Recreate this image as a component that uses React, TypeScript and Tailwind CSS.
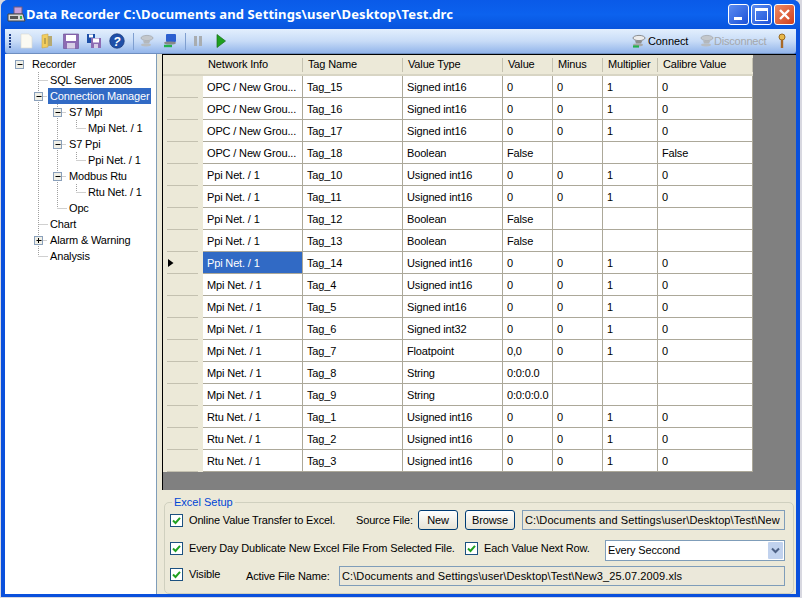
import type { ReactNode } from 'react';

const ROWS = [
  ['OPC / New Grou...', 'Tag_15', 'Signed int16', '0', '0', '1', '0'],
  ['OPC / New Grou...', 'Tag_16', 'Signed int16', '0', '0', '1', '0'],
  ['OPC / New Grou...', 'Tag_17', 'Signed int16', '0', '0', '1', '0'],
  ['OPC / New Grou...', 'Tag_18', 'Boolean', 'False', '', '', 'False'],
  ['Ppi Net. / 1', 'Tag_10', 'Usigned int16', '0', '0', '1', '0'],
  ['Ppi Net. / 1', 'Tag_11', 'Usigned int16', '0', '0', '1', '0'],
  ['Ppi Net. / 1', 'Tag_12', 'Boolean', 'False', '', '', ''],
  ['Ppi Net. / 1', 'Tag_13', 'Boolean', 'False', '', '', ''],
  ['Ppi Net. / 1', 'Tag_14', 'Usigned int16', '0', '0', '1', '0'],
  ['Mpi Net. / 1', 'Tag_4', 'Usigned int16', '0', '0', '1', '0'],
  ['Mpi Net. / 1', 'Tag_5', 'Signed int16', '0', '0', '1', '0'],
  ['Mpi Net. / 1', 'Tag_6', 'Signed int32', '0', '0', '1', '0'],
  ['Mpi Net. / 1', 'Tag_7', 'Floatpoint', '0,0', '0', '1', '0'],
  ['Mpi Net. / 1', 'Tag_8', 'String', '0:0:0.0', '', '', ''],
  ['Mpi Net. / 1', 'Tag_9', 'String', '0:0:0:0.0', '', '', ''],
  ['Rtu Net. / 1', 'Tag_1', 'Usigned int16', '0', '0', '1', '0'],
  ['Rtu Net. / 1', 'Tag_2', 'Usigned int16', '0', '0', '1', '0'],
  ['Rtu Net. / 1', 'Tag_3', 'Usigned int16', '0', '0', '1', '0'],
];

const COLS = [
  { name: 'Network Info', w: 100 },
  { name: 'Tag Name', w: 100 },
  { name: 'Value Type', w: 100 },
  { name: 'Value', w: 50 },
  { name: 'Minus', w: 50 },
  { name: 'Multiplier', w: 55 },
  { name: 'Calibre Value', w: 95 },
];

type TreeItem = {
  label: string;
  x: number;
  text: number;
  lines: number[];
  box?: '-' | '+';
  selected?: boolean;
};

// x: screen x of the +/- box or elbow, text: width of the guide column, lines: vertical guides
const TREE: TreeItem[] = [
  { label: 'Recorder', box: '-', x: 19, text: 25, lines: [] },
  { label: 'SQL Server 2005', x: 38, text: 43, lines: [38] },
  { label: 'Connection Manager', box: '-', x: 38, text: 43, lines: [38], selected: true },
  { label: 'S7 Mpi', box: '-', x: 57, text: 62, lines: [38, 57] },
  { label: 'Mpi Net. / 1', x: 76, text: 81, lines: [38, 57] },
  { label: 'S7 Ppi', box: '-', x: 57, text: 62, lines: [38, 57] },
  { label: 'Ppi Net. / 1', x: 76, text: 81, lines: [38, 57] },
  { label: 'Modbus Rtu', box: '-', x: 57, text: 62, lines: [38, 57] },
  { label: 'Rtu Net. / 1', x: 76, text: 81, lines: [38, 57] },
  { label: 'Opc', x: 57, text: 62, lines: [38] },
  { label: 'Chart', x: 38, text: 43, lines: [38] },
  { label: 'Alarm & Warning', box: '+', x: 38, text: 43, lines: [38] },
  { label: 'Analysis', x: 38, text: 43, lines: [] },
];

function TreeRow({ item, index }: { item: TreeItem; index: number }) {
  const cx = item.x - 4.5;
  return (
    <div className="flex h-4 items-center">
      <svg width={item.text} height="16" className="shrink-0">
        {item.lines.map((l) => (
          <line key={l} x1={l - 4.5} x2={l - 4.5} y1="0" y2="16" stroke="#a0a0a0" strokeDasharray="1 1" />
        ))}
        {!item.box && (
          <>
            <line x1={cx} x2={cx} y1="0" y2="8" stroke="#a0a0a0" strokeDasharray="1 1" />
            <line x1={cx} x2={cx + 9} y1="8.5" y2="8.5" stroke="#a0a0a0" strokeDasharray="1 1" />
          </>
        )}
        {item.box && index > 0 && (
          <line x1={cx + 5} x2={cx + 9} y1="8.5" y2="8.5" stroke="#a0a0a0" strokeDasharray="1 1" />
        )}
        {item.box && (
          <g>
            <rect x={cx - 4} y="4.5" width="8" height="8" fill="#f0efe6" stroke="#8aa0bb" />
            <line x1={cx - 2} x2={cx + 3} y1="8.5" y2="8.5" stroke="#000" />
            {item.box === '+' && <line x1={cx} x2={cx} y1="6" y2="11" stroke="#000" />}
          </g>
        )}
      </svg>
      <span
        className={`h-4 px-[2px] text-[11px] leading-[16px] tracking-[-0.15px] whitespace-nowrap ${
          item.selected ? 'w-[103px] bg-[#316ac5] text-white' : 'text-black'
        }`}
      >
        {item.label}
      </span>
    </div>
  );
}

function Check({ className = '' }: { className?: string }) {
  return (
    <span className={`flex h-[13px] w-[13px] shrink-0 items-center justify-center border border-[#1c5180] bg-white ${className}`}>
      <svg width="9" height="9" viewBox="0 0 9 9">
        <path d="M1 4.5 L3.5 7 L8 1.8" fill="none" stroke="#21a121" strokeWidth="2" />
      </svg>
    </span>
  );
}

function XpButton({ label, className }: { label: string; className: string }) {
  return (
    <button className={`flex h-[20px] shrink-0 items-center justify-center rounded-[3px] border border-[#003c74] bg-gradient-to-b from-white to-[#e6e3d6] text-[11px] text-black ${className}`}>
      {label}
    </button>
  );
}

function ReadonlyBox({ value, className }: { value: string; className: string }) {
  return (
    <div className={`flex h-[20px] shrink-0 items-center border border-[#7f9db9] bg-[#ebe8da] pl-[2px] text-[11px] whitespace-nowrap text-black ${className}`}>
      {value}
    </div>
  );
}

function ToolIcon({ children, className = '' }: { children: ReactNode; className?: string }) {
  return (
    <svg width="16" height="16" viewBox="0 0 16 16" className={`shrink-0 ${className}`}>
      {children}
    </svg>
  );
}

function Dish({ gray }: { gray?: boolean }) {
  return (
    <ToolIcon>
      <ellipse cx="9" cy="5" rx="6" ry="2.6" fill={gray ? '#c4c8cc' : '#ececec'} stroke={gray ? '#a6aaae' : '#777'} strokeWidth="0.8" />
      <path d="M5 7.5 L12.5 7.5 L11 10.5 L6 10.5 Z" fill={gray ? '#b4b8bc' : '#8e8e8e'} />
      <ellipse cx="8" cy="12" rx="5" ry="1.4" fill={gray ? '#b9bdc1' : '#a8a8a8'} />
      {!gray && <path d="M3 13.5 H9" stroke="#22b14c" strokeWidth="2.2" />}
    </ToolIcon>
  );
}

function Toolbar() {
  return (
    <div className="flex h-[25px] shrink-0 items-center rounded-b-[3px] border-b border-[#6f8fc0] bg-gradient-to-b from-[#e3effd] via-[#c8dcf7] to-[#93b5ea] pr-[6px] pl-[4px]">
      <div className="flex flex-col gap-[1px]">
        {[0, 1, 2, 3, 4].map((i) => (
          <span key={i} className="h-[2px] w-[2px] bg-[#20408a]" />
        ))}
      </div>
      <ToolIcon className="ml-[7px]">
        <path d="M3 1 H10.5 L14 4 V15 H3 Z" fill="#fbfaf2" stroke="#d8d8d0" strokeWidth="0.6" />
      </ToolIcon>
      <ToolIcon className="ml-[5px]">
        <path d="M3 2 L9 1 V14 L3 15 Z" fill="#f2cd5e" stroke="#c9a548" strokeWidth="0.6" />
        <path d="M9 3 H13 V13 H9 Z" fill="#b6a970" />
        <path d="M6 5 V11" stroke="#8b7a3a" />
      </ToolIcon>
      <ToolIcon className="ml-[8px]">
        <path d="M0.5 1 H15.5 V15.5 H0.5 Z" fill="#8d6bb3" stroke="#6a4a90" strokeWidth="0.6" />
        <rect x="3" y="2" width="10" height="6" fill="#fff" />
        <rect x="4" y="10" width="8" height="5.5" fill="#d8cfe6" />
      </ToolIcon>
      <ToolIcon className="ml-[7px]">
        <rect x="1" y="1" width="8" height="9" fill="#1d4fa8" />
        <rect x="3" y="1.5" width="4" height="3" fill="#fff" />
        <rect x="5" y="5" width="10" height="10" fill="#8d6bb3" />
        <rect x="7" y="5.5" width="6" height="4" fill="#fff" />
        <rect x="8" y="11" width="4" height="4" fill="#d8cfe6" />
      </ToolIcon>
      <ToolIcon className="ml-[7px]">
        <circle cx="8" cy="8" r="7.3" fill="#1f4fa8" stroke="#14306e" strokeWidth="0.6" />
        <text x="8" y="12.5" textAnchor="middle" fontSize="12" fontWeight="700" fontStyle="italic" fill="#fff" fontFamily="Liberation Sans">?</text>
      </ToolIcon>
      <span className="ml-[8px] h-[17px] w-[1px] bg-[#7f9fd0]" />
      <span className="ml-[4px]"><Dish gray /></span>
      <ToolIcon className="ml-[8px]">
        <rect x="4" y="1" width="10" height="8" rx="1" fill="#2c5fd0" />
        <ellipse cx="8" cy="10" rx="6" ry="1.6" fill="#888" />
        <path d="M2 13 L10 13" stroke="#22b14c" strokeWidth="2.4" />
      </ToolIcon>
      <span className="ml-[7px] h-[17px] w-[1px] bg-[#7f9fd0]" />
      <ToolIcon className="ml-[4px]">
        <rect x="4" y="3" width="3" height="10" fill="#a9adb0" />
        <rect x="9" y="3" width="3" height="10" fill="#a9adb0" />
      </ToolIcon>
      <ToolIcon className="ml-[7px]">
        <path d="M4 1.5 L12.5 8 L4 14.5 Z" fill="#1fa01f" stroke="#176f17" strokeWidth="0.7" />
      </ToolIcon>
      <div className="ml-auto flex items-center text-[11px]">
        <Dish />
        <span className="ml-[2px] w-[40px] tracking-[-0.1px] text-black">Connect</span>
        <span className="ml-[10px]"><Dish gray /></span>
        <span className="w-[52px] tracking-[-0.2px] text-[#a5a8ab]">Disconnect</span>
        <ToolIcon className="ml-[8px]">
          <circle cx="8" cy="4" r="3" fill="#e8b84a" stroke="#9a6a20" />
          <path d="M8 7 V15" stroke="#a86a28" strokeWidth="2.4" />
        </ToolIcon>
      </div>
    </div>
  );
}

function Grid() {
  return (
    <div className="h-[436px] border-t border-l border-black bg-[#808080]">
      <div className="flex h-[21px]">
        <div className="w-[40px] shrink-0 border-b-2 border-[#d8d5c4] bg-[#ece9d8]" />
        {COLS.map((c) => (
          <div
            key={c.name}
            style={{ width: c.w }}
            className="flex shrink-0 items-center border-b-2 border-[#d8d5c4] bg-[#ece9d8] pl-[5px] text-[11px] tracking-[-0.15px] text-black"
          >
            <span className="grow whitespace-nowrap">{c.name}</span>
            <span className="h-[14px] w-[1px] bg-[#c4c1b0]" />
          </div>
        ))}
      </div>
      {ROWS.map((row, r) => (
        <div key={r} className="flex h-[22px]">
          <div className="flex w-[40px] shrink-0 flex-col bg-[#ece9d8]">
            <div className="flex grow items-center pl-[5px]">
              {r === 8 && (
                <svg width="6" height="8" viewBox="0 0 6 8">
                  <path d="M0 0 L5.5 4 L0 8 Z" fill="#000" />
                </svg>
              )}
            </div>
            <span className="mr-[5px] ml-[4px] h-[1px] shrink-0 bg-[#c4c1b0]" />
          </div>
          {row.map((cell, c) => (
            <div
              key={c}
              style={{ width: COLS[c].w }}
              className={`flex shrink-0 items-center border-r border-b border-[#aca899] pt-[2px] pl-[4px] text-[11px] tracking-[-0.15px] whitespace-nowrap ${
                r === 8 && c === 0 ? 'bg-[#316ac5] text-white' : 'bg-white text-black'
              }`}
            >
              {cell}
            </div>
          ))}
        </div>
      ))}
    </div>
  );
}

function ExcelSetup() {
  return (
    <div className="relative mx-[2px] mt-[12px] h-[92px] rounded-[5px] border border-[#d0d0bf] px-[5px] pt-[7px] text-[11px] tracking-[-0.15px] text-black">
      <span className="absolute top-[-8px] left-[7px] bg-[#ece9d8] px-[2px] leading-[14px] tracking-normal text-[#0046d5]">Excel Setup</span>
      <div className="flex h-[20px] items-center">
        <Check />
        <span className="ml-[6px] w-[167px] whitespace-nowrap">Online Value Transfer to Excel.</span>
        <span className="w-[62px] whitespace-nowrap">Source File:</span>
        <XpButton label="New" className="w-[40px]" />
        <XpButton label="Browse" className="ml-[7px] w-[50px]" />
        <ReadonlyBox value="C:\Documents and Settings\user\Desktop\Test\New" className="ml-[7px] w-[263px] tracking-[0.1px]" />
      </div>
      <div className="mt-[10px] flex h-[21px] items-start">
        <Check className="mt-[2px]" />
        <span className="ml-[6px] w-[276px] leading-[17px] whitespace-nowrap">Every Day Dublicate New Excel File From Selected File.</span>
        <Check className="mt-[2px]" />
        <span className="ml-[6px] w-[121px] leading-[17px] whitespace-nowrap">Each Value Next Row.</span>
        <div className="flex h-[21px] w-[180px] items-center justify-between border border-[#7f9db9] bg-white pr-[1px] pl-[2px]">
          <span>Every Seccond</span>
          <span className="flex h-[17px] w-[15px] items-center justify-center rounded-[1px] bg-[#c1d2ee]">
            <svg width="9" height="7" viewBox="0 0 9 7">
              <path d="M1 1.5 L4.5 5 L8 1.5" fill="none" stroke="#4d6185" strokeWidth="2" />
            </svg>
          </span>
        </div>
      </div>
      <div className="mt-[5px] flex h-[20px] items-start">
        <Check className="mt-[2px]" />
        <span className="ml-[6px] w-[57px] leading-[17px]">Visible</span>
        <span className="w-[93px] leading-[20px] whitespace-nowrap">Active File Name:</span>
        <ReadonlyBox value="C:\Documents and Settings\user\Desktop\Test\New3_25.07.2009.xls" className="w-[446px] tracking-[0.1px]" />
      </div>
    </div>
  );
}

export default function App() {
  return (
    <div className='h-[598px] w-[802px] overflow-hidden bg-[#d8d8e0] font-["Liberation_Sans",sans-serif]'>
      <div className="ml-[1px] flex h-[597px] w-[799px] flex-col rounded-t-[7px] bg-[#0a50dc] px-[4px] pb-[3px]">
        <div className="-mx-[4px] flex h-[29px] shrink-0 items-center rounded-t-[7px] bg-gradient-to-b from-[#0a5ae8] via-[#0c62ee] to-[#0854dd] pr-[5px] pl-[6px]">
          <svg width="19" height="17" viewBox="0 0 19 17" className="shrink-0">
            <rect x="7" y="1" width="8" height="7" fill="#c9a0d8" stroke="#6c5a80" />
            <path d="M1 8 L16 8 L18 15 L1 15 Z" fill="#d8d8d8" stroke="#444" />
            <rect x="3" y="10" width="8" height="3" fill="#555" />
            <rect x="13" y="10" width="2" height="3" fill="#3ab54a" />
          </svg>
          <span className='font-["Noto_Sans",sans-serif] text-[13px] font-bold tracking-[0.1px] whitespace-nowrap text-white'>
            Data Recorder C:\Documents and Settings\user\Desktop\Test.drc
          </span>
          <div className="ml-auto flex gap-[2px]">
            <div className="flex h-[21px] w-[21px] items-end rounded-[3px] border border-white bg-gradient-to-br from-[#5c8cf0] to-[#1c50d8] pb-[4px] pl-[5px]">
              <span className="h-[3px] w-[8px] bg-white" />
            </div>
            <div className="flex h-[21px] w-[21px] items-center justify-center rounded-[3px] border border-white bg-gradient-to-br from-[#5c8cf0] to-[#1c50d8]">
              <span className="h-[13px] w-[13px] border border-t-[3px] border-white" />
            </div>
            <div className="flex h-[21px] w-[21px] items-center justify-center rounded-[3px] border border-white bg-gradient-to-br from-[#ee8a64] to-[#cf3c18]">
              <svg width="13" height="13" viewBox="0 0 13 13">
                <path d="M2 2 L11 11 M11 2 L2 11" stroke="#fff" strokeWidth="2.4" />
              </svg>
            </div>
          </div>
        </div>
        <Toolbar />
        <div className="flex min-h-0 grow bg-[#ece9d8]">
          <div className="w-[152px] shrink-0 border-r border-[#7f9db9] bg-white pt-[2px] text-[11px]">
            {TREE.map((item, i) => (
              <TreeRow key={item.label} item={item} index={i} />
            ))}
          </div>
          <div className="ml-[5px] min-w-0 grow">
            <Grid />
            <ExcelSetup />
          </div>
        </div>
      </div>
    </div>
  );
}
